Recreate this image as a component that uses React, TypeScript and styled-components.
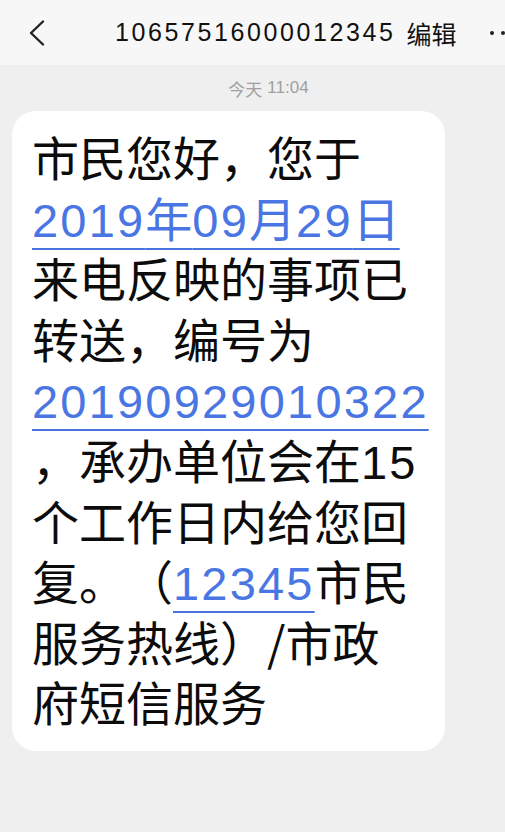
import React from "react";
import styled, { createGlobalStyle } from "styled-components";

const GlobalStyle = createGlobalStyle`
  html, body {
    margin: 0;
    padding: 0;
    background: #efefef;
  }
  body {
    font-family: "Noto Sans CJK SC", "Noto Sans", sans-serif;
    -webkit-font-smoothing: antialiased;
    text-spacing-trim: space-all;
  }
`;

const Page = styled.div`
  width: 505px;
  min-height: 832px;
  background: #efefef;
  overflow: hidden;
`;

const Header = styled.header`
  height: 65px;
  background: #f7f7f7;
  display: flex;
  align-items: center;
  position: relative;
  overflow: hidden;
`;

const BackButton = styled.div`
  width: 115px;
  padding-left: 28px;
  box-sizing: border-box;
  display: flex;
  align-items: center;
`;

const Title = styled.div`
  font-size: 25px;
  color: #111;
  white-space: nowrap;
  display: flex;
  align-items: center;
  gap: 11px;
`;

const Digits = styled.span`
  font-family: "Liberation Sans", "Noto Sans CJK SC", sans-serif;
  letter-spacing: 2.6px;
  font-size: 25px;
`;

const More = styled.div`
  position: absolute;
  left: 490px;
  top: 31px;
  display: flex;
  gap: 7px;
`;

const Dot = styled.span`
  width: 4px;
  height: 4px;
  border-radius: 50%;
  background: #222;
`;

const Stamp = styled.div`
  height: 46px;
  display: flex;
  align-items: center;
  justify-content: center;
  font-size: 17px;
  color: #a0a0a0;
  padding-left: 32px;
`;

const StampTime = styled.span`
  font-family: "Liberation Sans", sans-serif;
  margin-left: 5px;
`;

const Bubble = styled.div`
  margin-left: 12px;
  width: 433px;
  box-sizing: border-box;
  background: #fff;
  border-radius: 24px;
  padding: 15px 10px 19px 20px;
`;

const Line = styled.div`
  font-size: 47px;
  line-height: 60.6px;
  height: 60.6px;
  color: #0c0c0c;
  white-space: nowrap;
  text-spacing-trim: space-all;
`;

const Num = styled.span`
  font-family: "Liberation Sans", "Noto Sans CJK SC", sans-serif;
  letter-spacing: 2.2px;
`;

const Link = styled.span`
  color: #4a76e4;
  text-decoration: underline;
  text-decoration-color: #4a72dc;
  text-decoration-thickness: 2px;
  text-underline-offset: 11px;
`;

export default function App() {
  return (
    <Page>
      <GlobalStyle />
      <Header>
        <BackButton>
          <svg width="18" height="26" viewBox="0 0 18 26">
            <path d="M15 1.5 L3 13 L15 24.5" fill="none" stroke="#222" strokeWidth="2.4" strokeLinecap="round" strokeLinejoin="round" />
          </svg>
        </BackButton>
        <Title>
          <Digits>10657516000012345</Digits>
          <span>编辑</span>
        </Title>
        <More>
          <Dot />
          <Dot />
        </More>
      </Header>
      <Stamp>
        今天<StampTime>11:04</StampTime>
      </Stamp>
      <Bubble>
        <Line>市民您好，您于</Line>
        <Line>
          <Link>
            <Num>2019</Num>年<Num>09</Num>月<Num>29</Num>日
          </Link>
        </Line>
        <Line>来电反映的事项已</Line>
        <Line>转送，编号为</Line>
        <Line>
          <Link>
            <Num>20190929010322</Num>
          </Link>
        </Line>
        <Line>
          ，承办单位会在<Num>15</Num>
        </Line>
        <Line>个工作日内给您回</Line>
        <Line>
          复。（<Link><Num>12345</Num></Link>市民
        </Line>
        <Line>服务热线）/市政</Line>
        <Line>府短信服务</Line>
      </Bubble>
    </Page>
  );
}
